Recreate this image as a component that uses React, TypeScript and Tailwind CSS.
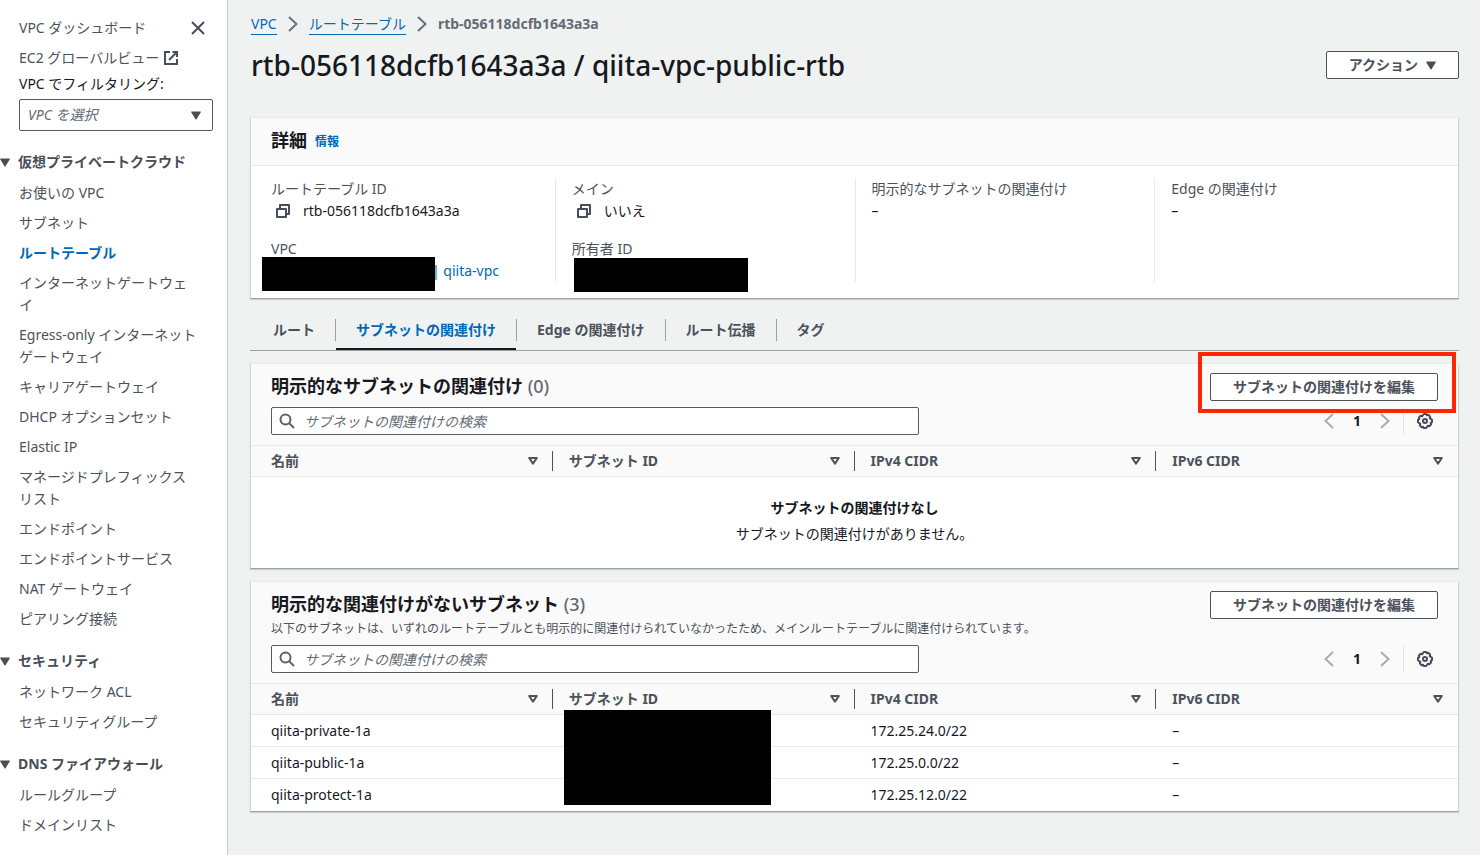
import React from 'react';

const sideLink = 'text-[#4b525b] hover:text-[#0069b5]';

function CaretDown({ className = '' }: { className?: string }) {
  return (
    <svg className={className} width="10" height="9" viewBox="0 0 10 9" fill="#474e58" aria-hidden="true">
      <path d="M0.6 0.5h8.8a0.5 0.5 0 0 1 .4.8L5.5 8.3a0.6 0.6 0 0 1-1 0L.2 1.3a0.5 0.5 0 0 1 .4-.8z" />
    </svg>
  );
}

function SortIcon() {
  return (
    <svg width="10" height="8" viewBox="0 0 10 8" fill="none" stroke="#4b525b" strokeWidth="2" aria-hidden="true">
      <path d="M1.200 1h7.600L5 6.600z" strokeLinejoin="round" />
    </svg>
  );
}

function Chevron({ direction = 'right', color = '#667079' }: { direction?: 'left' | 'right'; color?: string }) {
  return (
    <svg width="16" height="16" viewBox="0 0 16 16" fill="none" stroke={color} strokeWidth="2" aria-hidden="true">
      {direction === 'right' ? <path d="M4 1l7.5 7L4 15" /> : <path d="M12 1L4.500 8l7.500 7" />}
    </svg>
  );
}

function CopyIcon() {
  return (
    <svg width="16" height="16" viewBox="0 0 16 16" fill="none" stroke="#474e58" strokeWidth="2" strokeLinejoin="round" aria-hidden="true">
      <path d="M2 6h9v8H2z" />
      <path d="M5 6V2h9v9h-3" />
    </svg>
  );
}

function GearIcon() {
  return (
    <svg width="16" height="16" viewBox="0 0 16 16" fill="none" stroke="#474e58" strokeWidth="2" strokeLinejoin="round" aria-hidden="true">
      <path d="M6.800 1h2.400l.7 1.300 1.500-.5 1.800 1.800-.5 1.500L15 6.800v2.400l-1.300.7.5 1.500-1.800 1.800-1.500-.5L9.200 15H6.800l-.7-1.300-1.500.5-1.800-1.800.5-1.500L1 9.200V6.800l1.300-.7-.5-1.500 1.800-1.800 1.500.5z" />
      <circle cx="8" cy="8" r="2" />
    </svg>
  );
}

const sections = [
  {
    title: '仮想プライベートクラウド',
    items: [
      'お使いの VPC',
      'サブネット',
      'ルートテーブル',
      'インターネットゲートウェイ',
      'Egress-only インターネットゲートウェイ',
      'キャリアゲートウェイ',
      'DHCP オプションセット',
      'Elastic IP',
      'マネージドプレフィックスリスト',
      'エンドポイント',
      'エンドポイントサービス',
      'NAT ゲートウェイ',
      'ピアリング接続',
    ],
  },
  { title: 'セキュリティ', items: ['ネットワーク ACL', 'セキュリティグループ'] },
  { title: 'DNS ファイアウォール', items: ['ルールグループ', 'ドメインリスト'] },
];

function Sidebar() {
  return (
    <nav className="w-[228px] shrink-0 border-r border-[#c5cccc] bg-white pb-5">
      <div className="flex items-start justify-between pt-[17px] pr-[22px] pl-[19px]">
        <a href="#dashboard" className={sideLink}>VPC ダッシュボード</a>
        <button type="button" aria-label="閉じる" className="mt-1">
          <svg width="14" height="14" viewBox="0 0 14 14" stroke="#474e58" strokeWidth="2" aria-hidden="true">
            <path d="M1 1l12 12M13 1L1 13" />
          </svg>
        </button>
      </div>
      <div className="mt-2 pr-[14px] pl-[19px]">
        <a href="#ec2" className={`flex items-center gap-1 ${sideLink}`}>
          EC2 グローバルビュー
          <svg width="16" height="16" viewBox="0 0 16 16" fill="none" stroke="#474e58" strokeWidth="2" aria-hidden="true">
            <path d="M7 2H2v12h12V9" />
            <path d="M9.500 2H14v5M14 2L6 10" />
          </svg>
        </a>
        <label htmlFor="vpc-filter" className="mt-1 block text-[#16191f]">VPC でフィルタリング:</label>
        <div className="relative mt-1">
          <select
            id="vpc-filter"
            defaultValue=""
            className="h-8 w-full appearance-none rounded-[2px] border border-[#545b64] bg-white px-2 text-[#636b74] italic"
          >
            <option value="">VPC を選択</option>
          </select>
          <CaretDown className="pointer-events-none absolute top-3 right-3" />
        </div>
      </div>
      {sections.map((section) => (
        <section key={section.title} className="mt-5">
          <h2 className="font-bold text-[#474e58]">
            <button type="button" className="flex items-center gap-2" aria-expanded="true">
              <CaretDown />
              {section.title}
            </button>
          </h2>
          <ul className="mt-[9px] flex flex-col gap-2 pr-7 pl-[19px]">
            {section.items.map((item) => (
              <li key={item}>
                <a
                  href="#nav"
                  className={item === 'ルートテーブル' ? 'block font-bold text-[#0069b5]' : `block ${sideLink}`}
                >
                  {item}
                </a>
              </li>
            ))}
          </ul>
        </section>
      ))}
    </nav>
  );
}

function Field({ label, children }: { label: string; children: React.ReactNode }) {
  return (
    <div>
      <dt className="text-[#4b525b]">{label}</dt>
      <dd className="relative flex h-[22px] items-center">{children}</dd>
    </div>
  );
}

function CopyValue({ children }: { children: React.ReactNode }) {
  return (
    <>
      <button type="button" aria-label="コピー" className="mr-3 ml-1">
        <CopyIcon />
      </button>
      {children}
    </>
  );
}

const card = 'border border-[#e6eaea] border-r-[#cfd5d5] border-b-[#98a3a5] border-l-[#cfd5d5] bg-white shadow-[0_1px_1px_0_rgba(0,28,36,0.15)]';
const fieldColumn = 'flex flex-col gap-4 border-l border-[#e6eaea] pl-4';

function Details() {
  return (
    <section className={`mt-[34px] ${card}`}>
      <header className="flex h-12 items-center gap-2 border-b border-[#e6eaea] bg-[#fafafa] px-5 pb-[3px]">
        <h2 className="text-[18px] font-bold">詳細</h2>
        <a href="#info" className="pt-[3px] text-[12px] font-bold text-[#0069b5]">情報</a>
      </header>
      <dl className="grid grid-cols-4 px-1 pt-3 pb-4">
        <div className="flex flex-col gap-4 pl-4">
          <Field label="ルートテーブル ID">
            <CopyValue>rtb-056118dcfb1643a3a</CopyValue>
          </Field>
          <Field label="VPC">
            <span className="absolute top-[-3px] left-[-9px] h-[34px] w-[173px] bg-black" />
            <a href="#vpc" className="pl-[161px] text-[#0069b5]">| qiita-vpc</a>
          </Field>
        </div>
        <div className={fieldColumn}>
          <Field label="メイン">
            <CopyValue>いいえ</CopyValue>
          </Field>
          <Field label="所有者 ID">
            <span className="absolute top-[-2px] left-[2px] h-[34px] w-[174px] bg-black" />
          </Field>
        </div>
        <div className={fieldColumn}>
          <Field label="明示的なサブネットの関連付け">–</Field>
        </div>
        <div className={fieldColumn}>
          <Field label="Edge の関連付け">–</Field>
        </div>
      </dl>
    </section>
  );
}

const tabs = ['ルート', 'サブネットの関連付け', 'Edge の関連付け', 'ルート伝播', 'タグ'];

function Tabs() {
  return (
    <div role="tablist" className="mt-5 flex border-b border-[#98a3a5] pl-[3px]">
      {tabs.map((tab, i) => (
        <div key={tab} className="flex items-start">
          <button
            type="button"
            role="tab"
            aria-selected={i === 1}
            className={
              i === 1
                ? 'border-b-2 border-[#16191f] px-5 pb-[7px] font-bold text-[#0069b5]'
                : 'border-b-2 border-transparent px-5 pb-[7px] font-bold text-[#4b525b]'
            }
          >
            {tab}
          </button>
          {i < tabs.length - 1 && <span className="h-[22px] w-px bg-[#98a3a5]" />}
        </div>
      ))}
    </div>
  );
}

type Row = { name: string; ipv4: string; ipv6: string };

const columns = ['名前', 'サブネット ID', 'IPv4 CIDR', 'IPv6 CIDR'];

const rows: Row[] = [
  { name: 'qiita-private-1a', ipv4: '172.25.24.0/22', ipv6: '–' },
  { name: 'qiita-public-1a', ipv4: '172.25.0.0/22', ipv6: '–' },
  { name: 'qiita-protect-1a', ipv4: '172.25.12.0/22', ipv6: '–' },
];

const outlineButton =
  'flex h-7 shrink-0 items-center gap-2 rounded-[2px] border border-[#4b525b] bg-white px-[22px] font-bold text-[#4b525b]';

function SubnetTable({
  id,
  title,
  count,
  description,
  data,
  highlighted = false,
}: {
  id: string;
  title: string;
  count: number;
  description?: string;
  data: Row[];
  highlighted?: boolean;
}) {
  return (
    <section className={`mt-3 ${card}`}>
      <header className="border-b border-[#e6eaea] bg-[#fafafa] px-5 pt-[9px] pb-[10px]">
        <div className="flex items-start justify-between">
          <div>
            <h2 className="pb-[2px] text-[18px] leading-[26px] font-bold">
              {title} <span className="font-medium text-[#636b74]">({count})</span>
            </h2>
            {description && <p className="text-[12px] leading-[20px] text-[#4b525b]">{description}</p>}
          </div>
          <div className="relative">
            <button type="button" className={outlineButton}>サブネットの関連付けを編集</button>
            {highlighted && (
              <span className="pointer-events-none absolute -top-[21px] -right-[18px] -bottom-3 -left-3 z-10 border-4 border-[#ff2600]" />
            )}
          </div>
        </div>
        <div className="mt-[6px] flex items-center justify-between">
          <div className="relative w-[648px]">
            <svg className="absolute top-[6px] left-2" width="16" height="16" viewBox="0 0 16 16" fill="none" stroke="#5a626b" strokeWidth="2" aria-hidden="true">
              <circle cx="6.500" cy="6.500" r="5" />
              <path d="M10 10l5 5" />
            </svg>
            <input
              id={id}
              type="search"
              aria-label="サブネットの関連付けの検索"
              placeholder="サブネットの関連付けの検索"
              className="block h-7 w-full rounded-[2px] border border-[#545b64] bg-white pr-2 pl-8 placeholder:text-[#636b74] placeholder:italic"
            />
          </div>
          <div className="flex items-center">
            <button type="button" aria-label="前のページ"><Chevron direction="left" color="#a3afb1" /></button>
            <button type="button" className="w-10 text-center font-bold">1</button>
            <button type="button" aria-label="次のページ"><Chevron color="#a3afb1" /></button>
            <span className="ml-[10px] h-7 w-px bg-[#e0e5e5]" />
            <button type="button" aria-label="設定" className="mr-[5px] ml-[13px]"><GearIcon /></button>
          </div>
        </div>
      </header>
      <table className="w-full table-fixed border-separate border-spacing-0">
        <thead className="bg-[#fafafa]">
          <tr>
            {columns.map((column, i) => (
              <th key={column} scope="col" className="h-[31px] border-b border-[#e6eaea] p-0 text-left text-[#4b525b]">
                <div
                  className={`flex h-5 items-center justify-between ${i === 0 ? 'pl-5' : 'pl-4'} ${
                    i < columns.length - 1 ? 'border-r border-[#4b525b] pr-[14px]' : 'pr-[15px]'
                  }`}
                >
                  {column}
                  <SortIcon />
                </div>
              </th>
            ))}
          </tr>
        </thead>
        <tbody>
          {data.length === 0 && (
            <tr>
              <td colSpan={4} className="px-5 pt-5 pb-[23px] text-center">
                <p className="font-bold">サブネットの関連付けなし</p>
                <p className="mt-1">サブネットの関連付けがありません。</p>
              </td>
            </tr>
          )}
          {data.map((row, i) => {
            const cell = i < data.length - 1 ? 'h-8 border-b border-[#e6eaea] p-0' : 'h-8 p-0';
            return (
              <tr key={row.name}>
                <td className={`${cell} pl-5!`}>{row.name}</td>
                <td className={`${cell} relative`}>
                  {i === 0 && <span className="absolute top-[-5px] left-[11px] z-10 h-[95px] w-[207px] bg-black" />}
                </td>
                <td className={`${cell} pl-4!`}>{row.ipv4}</td>
                <td className={`${cell} pl-4!`}>{row.ipv6}</td>
              </tr>
            );
          })}
        </tbody>
      </table>
    </section>
  );
}

export default function App() {
  return (
    <div
      lang="ja"
      className="flex min-h-screen bg-[#f0f2f2] font-['Noto_Sans','Noto_Sans_CJK_JP',sans-serif] text-[14px] leading-[22px] text-[#16191f]"
    >
      <Sidebar />
      <main className="min-w-0 flex-1 pt-[13px] pr-[21px] pb-8 pl-[22px]">
        <nav aria-label="パンくずリスト">
          <ol className="flex items-center gap-2 pl-px">
            <li><a href="#vpc" className="block border-b border-[#0069b5] leading-[20px] text-[#0069b5]">VPC</a></li>
            <li><Chevron /></li>
            <li><a href="#route-tables" className="block border-b border-[#0069b5] leading-[20px] text-[#0069b5]">ルートテーブル</a></li>
            <li><Chevron /></li>
            <li className="font-bold text-[#636b74]">rtb-056118dcfb1643a3a</li>
          </ol>
        </nav>
        <div className="mt-3 flex items-center justify-between">
          <h1 className="pl-px text-[28px] leading-[36px] font-medium">rtb-056118dcfb1643a3a / qiita-vpc-public-rtb</h1>
          <button type="button" className={outlineButton}>
            アクション
            <CaretDown />
          </button>
        </div>
        <Details />
        <Tabs />
        <SubnetTable id="explicit-search" title="明示的なサブネットの関連付け" count={0} data={[]} highlighted />
        <SubnetTable
          id="implicit-search"
          title="明示的な関連付けがないサブネット"
          count={3}
          description="以下のサブネットは、いずれのルートテーブルとも明示的に関連付けられていなかったため、メインルートテーブルに関連付けられています。"
          data={rows}
        />
      </main>
    </div>
  );
}
